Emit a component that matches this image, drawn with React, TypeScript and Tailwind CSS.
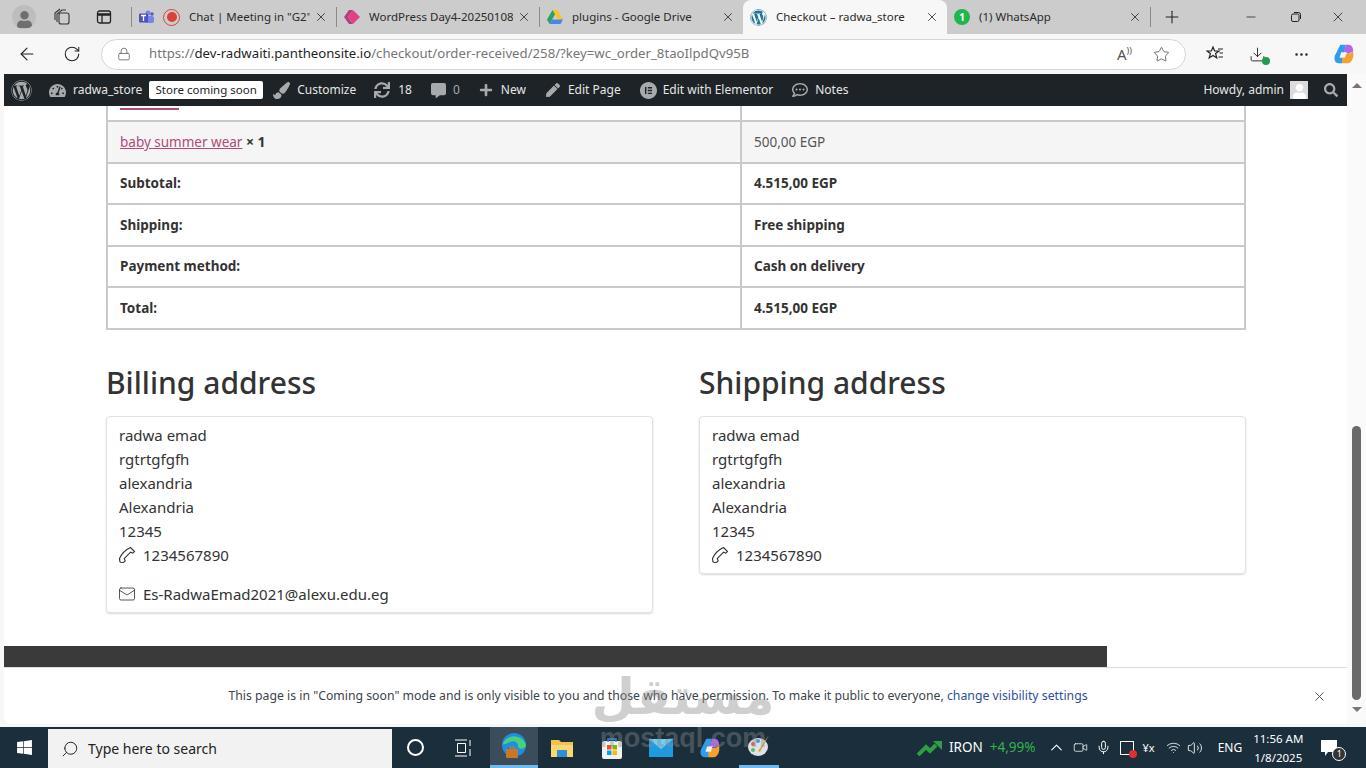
import type { ReactNode } from 'react'
import {
  ArrowLeft,
  ChevronUp,
  Download,
  Lock,
  Mail,
  Mic,
  Minus,
  MoreHorizontal,
  Plus,
  RotateCw,
  Search,
  Star,
  Video,
  Volume2,
  Wifi,
  X,
} from 'lucide-react'
import {
  FaCommentAlt,
  FaPaintBrush,
  FaPen,
  FaPlus,
  FaRegCommentDots,
  FaSearch,
  FaSync,
  FaTachometerAlt,
  FaUser,
  FaWindows,
  FaWordpress,
} from 'react-icons/fa'
import { SiElementor } from 'react-icons/si'

const ROWS = [
  { label: 'Subtotal:', value: '4.515,00 EGP' },
  { label: 'Shipping:', value: 'Free shipping' },
  { label: 'Payment method:', value: 'Cash on delivery' },
  { label: 'Total:', value: '4.515,00 EGP' },
]

const ADDRESS = ['radwa emad', 'rgtrtgfgfh', 'alexandria', 'Alexandria', '12345']

function TeamsIcon() {
  return (
    <svg width="15" height="15" viewBox="0 0 15 15">
      <circle cx="9" cy="3" r="2.5" fill="#7b83eb" />
      <circle cx="13" cy="4" r="1.7" fill="#5059c9" />
      <rect x="6" y="6" width="9" height="7" rx="2" fill="#7b83eb" />
      <rect x="0" y="3.5" width="9" height="9" rx="1" fill="#4b53bc" />
      <path d="M2 5.5h5M4.5 5.5V11" stroke="#fff" strokeWidth="1.3" />
    </svg>
  )
}

function DriveIcon() {
  return (
    <svg width="16" height="15" viewBox="0 0 16 15">
      <path d="M5.5 0h5L16 9.5h-5z" fill="#f7c325" />
      <path d="M5.5 0 0 9.5 2.5 14 8 4.5z" fill="#2da160" />
      <path d="M2.5 14h11l2.5-4.5H5z" fill="#4a86e8" />
    </svg>
  )
}

function SlidesIcon() {
  return (
    <svg width="16" height="14" viewBox="0 0 16 14">
      <path d="M0 7 5 0h4L4 7l5 7H5z" fill="#b0407c" />
      <path d="M4 7 9 0l7 7-7 7z" fill="#e0408a" />
    </svg>
  )
}

function CopilotIcon({ size }: { size: number }) {
  return (
    <svg width={size} height={size} viewBox="0 0 24 24">
      <path d="M8 2h6l-4 20H6C2 22 1 18 2 14z" fill="#2f9cf0" />
      <path d="M14 2h3c3 0 5 3 5 7l-5 3-5-2z" fill="#b566e8" />
      <path d="M10 12h8l4-3c1 6-1 13-6 13h-6z" fill="#f6a02d" />
      <path d="M9 10h6l-2 6H7z" fill="#f2f2f2" />
    </svg>
  )
}

function EdgeIcon() {
  return (
    <svg width="28" height="28" viewBox="0 0 28 28">
      <circle cx="14" cy="13" r="12" fill="#1f8ee0" />
      <path d="M3 12C5 3 22 1 26 13c0 4-6 5-8 2 1-4-4-7-8-5-3 1-5 3-7 2z" fill="#46d17e" />
      <path d="M9 15c0 5 5 9 12 8-4 3-12 3-15-3z" fill="#0c5aa6" />
      <rect x="6" y="17" width="12" height="9" rx="1" fill="#c9772a" />
      <rect x="10" y="15" width="4" height="3" fill="none" stroke="#c9772a" strokeWidth="1.2" />
    </svg>
  )
}

function HandsetIcon() {
  return (
    <svg width="18" height="18" viewBox="0 0 18 18" fill="none" stroke="#333" strokeWidth="1.1" className="-ml-px shrink-0">
      <path d="M12.5 1.5 16.5 5.5 14.8 7.2 12.6 6.2 6.2 12.6 7.2 14.8 5.5 16.5 2.6 16.2 1.8 15.4 1.5 12.5C3.5 8 8 3.5 12.5 1.5z" />
    </svg>
  )
}

function TabSeparator() {
  return <div className="h-5 w-px shrink-0 bg-[#8a8a8a]" />
}

function Tab({
  icon,
  title,
  width,
  active,
}: {
  icon: ReactNode
  title: string
  width: string
  active?: boolean
}) {
  return (
    <div
      className={`flex h-[34px] shrink-0 items-center pl-[7px] pr-[8px] text-[11.5px] text-[#2a2a2a] ${width} ${
        active ? 'rounded-t-lg bg-[#f7f7f7]' : ''
      }`}
    >
      <div className="flex shrink-0 items-center gap-[9px]">{icon}</div>
      <span className="ml-[9px] min-w-0 flex-1 overflow-hidden whitespace-nowrap">{title}</span>
      <X size={14} strokeWidth={1.5} className="ml-1 shrink-0 text-[#333]" />
    </div>
  )
}

function BrowserTabs() {
  return (
    <div className="flex h-[34px] shrink-0 items-center bg-[#cccccc]">
      <div className="flex w-[44px] justify-center pl-1">
        <div className="flex h-6 w-6 items-center justify-center overflow-hidden rounded-full bg-[#bdbdbd]">
          <FaUser size={17} className="mt-1 text-[#6f6f6f]" />
        </div>
      </div>
      <svg width="18" height="18" viewBox="0 0 18 18" fill="none" stroke="#333" strokeWidth="1.1" className="ml-[9px]">
        <rect x="6" y="5" width="10" height="11" rx="2" />
        <path d="M4 14V6l5-4h4M2 12V5l5-4" />
      </svg>
      <svg width="16" height="16" viewBox="0 0 16 16" fill="none" stroke="#222" strokeWidth="1.3" className="ml-[25px]">
        <rect x="1.5" y="2" width="13" height="12" rx="2" />
        <path d="M1.5 5.5h13" strokeWidth="2.5" />
        <path d="M6 5.5V14" />
      </svg>
      <div className="ml-[19px]">
        <TabSeparator />
      </div>
      <Tab
        width="w-[204px]"
        title={'Chat | Meeting in "G2"'}
        icon={
          <>
            <TeamsIcon />
            <span className="flex h-[17px] w-[17px] items-center justify-center rounded-full border border-[#d9413a]">
              <span className="h-[10px] w-[10px] rounded-full bg-[#d9413a]" />
            </span>
          </>
        }
      />
      <TabSeparator />
      <Tab width="w-[202px]" title="WordPress Day4-20250108" icon={<SlidesIcon />} />
      <TabSeparator />
      <Tab width="w-[203px]" title="plugins - Google Drive" icon={<DriveIcon />} />
      <Tab
        active
        width="w-[204px]"
        title="Checkout – radwa_store"
        icon={<FaWordpress size={17} className="text-[#21759b]" />}
      />
      <Tab
        width="w-[203px]"
        title="(1) WhatsApp"
        icon={
          <span className="flex h-4 w-4 items-center justify-center rounded-full bg-[#1fb650] text-[10px] font-bold text-white">
            1
          </span>
        }
      />
      <TabSeparator />
      <Plus size={20} strokeWidth={1.3} className="ml-[11px] text-[#222]" />
      <Minus size={14} strokeWidth={1.3} className="ml-[62px] text-[#222]" />
      <svg width="12" height="12" viewBox="0 0 12 12" fill="none" stroke="#222" className="ml-[32px]">
        <rect x="1.5" y="3" width="7.5" height="7.5" rx="1.5" />
        <path d="M4 1.5h4.5a2 2 0 0 1 2 2V8" />
      </svg>
      <X size={16} strokeWidth={1.2} className="ml-[28px] text-[#222]" />
    </div>
  )
}

function BrowserToolbar() {
  return (
    <div className="flex h-[40px] shrink-0 items-center bg-[#f7f7f7] text-[#222]">
      <ArrowLeft size={20} strokeWidth={1.4} className="ml-[17px]" />
      <RotateCw size={18} strokeWidth={1.4} className="ml-[26px]" />
      <div className="ml-[20px] flex h-[31px] w-[1085px] items-center rounded-full border border-[#d5d5d5] bg-white">
        <Lock size={14} strokeWidth={1.3} className="ml-[15px] text-[#555]" />
        <span className="ml-[18px] whitespace-nowrap text-[13.2px] text-[#767676]">
          https://<span className="text-[#1f1f1f]">dev-radwaiti.pantheonsite.io</span>
          /checkout/order-received/258/?key=wc_order_8taoIlpdQv95B
        </span>
        <div className="ml-auto flex items-center gap-[21px] pr-[15px] text-[#555]">
          <span className="text-[15px] leading-none">
            A<span className="text-[9px] align-super">))</span>
          </span>
          <Star size={17} strokeWidth={1.2} />
        </div>
      </div>
      <svg width="18" height="18" viewBox="0 0 18 18" fill="none" stroke="#222" strokeWidth="1.2" className="ml-[20px]">
        <path d="m7 2 1.6 4H13l-3.4 2.6 1.2 4.4L7 10.5 3.2 13l1.2-4.4L1 6h4.4z" />
        <path d="M12 4h5M13.5 8H17M12.5 12H17" />
      </svg>
      <div className="relative ml-[25px]">
        <Download size={17} strokeWidth={1.3} />
        <span className="absolute -bottom-0.5 -right-1 h-2 w-2 rounded-full bg-[#1f9d55]" />
      </div>
      <MoreHorizontal size={17} strokeWidth={1.6} className="ml-[27px]" />
      <div className="ml-[23px]">
        <CopilotIcon size={22} />
      </div>
    </div>
  )
}

function AdminItem({ icon, label, className }: { icon: ReactNode; label: string; className: string }) {
  return (
    <div className={`flex items-center ${className}`}>
      {icon}
      <span>{label}</span>
    </div>
  )
}

function AdminBar() {
  return (
    <div className="flex h-8 shrink-0 items-center bg-[#1d2327] text-[12px] text-[#e6e6e6]">
      <FaWordpress size={21} className="ml-[7px] text-[#a7aaad]" />
      <AdminItem
        className="ml-[17px] gap-[7px]"
        icon={<FaTachometerAlt size={17} className="text-[#a7aaad]" />}
        label="radwa_store"
      />
      <span className="ml-[7px] flex h-[18px] w-[114px] items-center justify-center rounded-[2px] bg-white text-[11.5px] text-[#1d2327]">
        Store coming soon
      </span>
      <AdminItem
        className="ml-[10px] gap-[7px]"
        icon={<FaPaintBrush size={17} className="text-[#a7aaad]" />}
        label="Customize"
      />
      <AdminItem
        className="ml-[18px] gap-[8px]"
        icon={<FaSync size={16} className="text-[#a7aaad]" />}
        label="18"
      />
      <div className="ml-[19px] flex items-center gap-[7px] text-[#a7aaad]">
        <FaCommentAlt size={15} />
        <span>0</span>
      </div>
      <AdminItem
        className="ml-[19px] gap-[8px]"
        icon={<FaPlus size={14} className="text-[#a7aaad]" />}
        label="New"
      />
      <AdminItem
        className="ml-[20px] gap-[8px]"
        icon={<FaPen size={14} className="text-[#a7aaad]" />}
        label="Edit Page"
      />
      <AdminItem
        className="ml-[19px] gap-[6px]"
        icon={<SiElementor size={17} className="text-[#a7aaad]" />}
        label="Edit with Elementor"
      />
      <AdminItem
        className="ml-[19px] gap-[7px]"
        icon={<FaRegCommentDots size={16} className="text-[#a7aaad]" />}
        label="Notes"
      />
      <div className="ml-auto flex items-center">
        <span>Howdy, admin</span>
        <span className="ml-[6px] flex h-[18px] w-[18px] items-end justify-center overflow-hidden bg-[#dcdcdc]">
          <FaUser size={15} className="text-white" />
        </span>
        <FaSearch size={14} className="ml-[16px] mr-[9px] text-[#a7aaad]" />
      </div>
    </div>
  )
}

function OrderTable() {
  return (
    <table className="ml-[102px] w-[1140px] table-fixed border-collapse border-2 border-[#c9c9c9] text-[13.5px] text-[#333]">
      <colgroup>
        <col className="w-[634px]" />
        <col />
      </colgroup>
      <tbody>
        <tr className="h-[41px]">
          <td className="border-2 border-[#c9c9c9] px-3 pt-[27px] align-top">
            {/* only the underline of this row's link is left below the admin bar */}
            <div className="h-[1.5px] w-[59px] bg-[#b14a7a]" />
          </td>
          <td className="border-2 border-[#c9c9c9] px-3" />
        </tr>
        <tr className="h-[41.5px] bg-[#f5f5f5]">
          <td className="border-2 border-[#c9c9c9] px-3">
            <span className="text-[#b14a7a] underline">baby summer wear</span> <b className="text-[14px]">× 1</b>
          </td>
          <td className="border-2 border-[#c9c9c9] px-3 text-[#555]">500,00 EGP</td>
        </tr>
        {ROWS.map((row) => (
          <tr key={row.label} className="h-[41.5px] font-bold">
            <td className="border-2 border-[#c9c9c9] px-3">{row.label}</td>
            <td className="border-2 border-[#c9c9c9] px-3">{row.value}</td>
          </tr>
        ))}
      </tbody>
    </table>
  )
}

function AddressCard({ title, email, width }: { title: string; email?: string; width: string }) {
  return (
    <div className={width}>
      <h2 className="mt-px text-[30px] font-medium leading-[38px] text-[#333]">{title}</h2>
      <div className="mt-[14px] rounded border border-[#e2e2e2] px-3 pb-[6px] pt-[6px] text-[15px] leading-6 text-[#333] shadow-[0_1px_2px_rgba(0,0,0,0.15)]">
        {ADDRESS.map((line) => (
          <div key={line}>{line}</div>
        ))}
        <div className="flex items-center gap-[7px]">
          <HandsetIcon />
          1234567890
        </div>
        {email && (
          <div className="mt-[15px] flex items-center gap-[7px]">
            <Mail size={18} strokeWidth={1.1} className="-ml-px" />
            {email}
          </div>
        )}
      </div>
    </div>
  )
}

function ScrollTrack() {
  return (
    <div className="flex h-full w-[19px] shrink-0 flex-col items-center bg-[#fafafa] pt-[9px]">
      <div className="h-0 w-0 border-x-[5px] border-b-[5px] border-x-transparent border-b-[#777]" />
      <div className="mt-[338px] h-[274px] w-[9px] rounded-full bg-[#6a6a6a]" />
      <div className="mt-[7px] h-0 w-0 border-x-[5px] border-t-[5px] border-x-transparent border-t-[#777]" />
    </div>
  )
}

function PageViewport() {
  return (
    <div className="flex h-[653px] shrink-0 bg-[#f7f7f7] pb-[3px] pl-[4px]">
      <div className="flex min-w-0 flex-1 overflow-hidden rounded-b-lg bg-white">
        <div className="flex w-[1343px] shrink-0 flex-col">
          <AdminBar />
          <div className="h-[561px] overflow-hidden">
            <div className="-mt-[27px]">
              <OrderTable />
            </div>
            <div className="ml-[102px] mt-[33px] flex items-start gap-[46px]">
              <AddressCard width="w-[547px]" title="Billing address" email="Es-RadwaEmad2021@alexu.edu.eg" />
              <AddressCard width="w-[547px]" title="Shipping address" />
            </div>
            <div className="mt-[33px] h-[21px] w-[1103px] bg-[#3a3a3a]" />
          </div>
          <div className="relative flex h-[57px] items-center justify-center border-t border-[#dcdcdc] pr-[35px] pt-px text-[12.25px] text-[#3c434a]">
            <span>
              This page is in "Coming soon" mode and is only visible to you and those who have permission. To make it
              public to everyone, <span className="text-[#2b4ea0]">change visibility settings</span>
            </span>
            <X size={15} strokeWidth={1.6} className="absolute right-[20px] top-[21px] text-[#555]" />
          </div>
        </div>
        <ScrollTrack />
      </div>
    </div>
  )
}

function Taskbar() {
  return (
    <div className="flex h-[41px] flex-1 items-center bg-[#1b2e3c] text-white">
      <div className="flex w-[48px] justify-center">
        <FaWindows size={17} />
      </div>
      <div className="flex h-[39px] w-[344px] items-center self-end bg-[#f2f2f2] text-[14px] text-[#222]">
        <Search size={18} strokeWidth={1.3} className="ml-[13px] -scale-x-100" />
        <span className="ml-[9px]">Type here to search</span>
      </div>
      <div className="ml-[15px] h-[17px] w-[17px] rounded-full border-2 border-white" />
      <svg width="18" height="18" viewBox="0 0 18 18" fill="none" stroke="#fff" className="ml-[30px]">
        <path d="M1 1h12M1 17h12M3.5 4.5h8v9h-8zM16 1v6M16 10v7" />
      </svg>
      <div className="ml-[18px] flex h-full w-[48px] items-center justify-center border-b-[3px] border-[#6fb9ee] bg-[#3b4d5b]">
        <EdgeIcon />
      </div>
      <svg width="22" height="20" viewBox="0 0 22 20" className="ml-[13px]">
        <path d="M0 2h8l2 2h12v15H0z" fill="#f2c14e" />
        <path d="M0 7h22v12H0z" fill="#f8d775" />
        <rect x="6" y="12" width="10" height="7" fill="#2d8fd5" />
      </svg>
      <svg width="22" height="22" viewBox="0 0 22 22" className="ml-[28px]">
        <rect x="1" y="4" width="20" height="18" rx="2" fill="#f2f2f2" />
        <path d="M7 5V2h8v3" fill="none" stroke="#2d8fd5" strokeWidth="1.5" />
        <rect x="6" y="8" width="4.5" height="4.5" fill="#f25022" />
        <rect x="11.5" y="8" width="4.5" height="4.5" fill="#7fba00" />
        <rect x="6" y="13.5" width="4.5" height="4.5" fill="#00a4ef" />
        <rect x="11.5" y="13.5" width="4.5" height="4.5" fill="#ffb900" />
      </svg>
      <svg width="24" height="18" viewBox="0 0 24 18" className="ml-[26px]">
        <rect width="24" height="18" fill="#1e9be0" />
        <path d="M0 0 12 10 24 0z" fill="#6fd0f5" />
      </svg>
      <div className="ml-[26px]">
        <CopilotIcon size={22} />
      </div>
      <div className="ml-[18px] flex h-full w-[40px] items-center justify-center border-b-[3px] border-[#6fb9ee]">
        <svg width="24" height="24" viewBox="0 0 24 24">
          <ellipse cx="11" cy="13" rx="10" ry="9" fill="#dfe3e8" />
          <circle cx="6" cy="10" r="2" fill="#e25555" />
          <circle cx="11" cy="7" r="2" fill="#3c9be0" />
          <circle cx="6" cy="16" r="2" fill="#5dbb63" />
          <path d="m22 1-9 17-2-1z" fill="#d9a441" />
        </svg>
      </div>
      <svg width="26" height="16" viewBox="0 0 26 16" className="ml-[138px]">
        <path d="M1 15 9 7l4 4 6-6" fill="none" stroke="#2f9e44" strokeWidth="4" />
        <path d="M16 1h9v9z" fill="#2f9e44" />
      </svg>
      <span className="ml-[6px] text-[13.5px]">IRON</span>
      <span className="ml-[7px] text-[13.5px] text-[#37b24d]">+4,99%</span>
      <ChevronUp size={19} strokeWidth={1.4} className="ml-[11px]" />
      <Video size={15} strokeWidth={1.2} className="ml-[7px]" />
      <Mic size={15} strokeWidth={1.6} className="ml-[8px]" />
      <div className="relative ml-[9px] h-[14px] w-[14px] border border-white">
        <span className="absolute -bottom-1 -right-1 h-2 w-2 rounded-full bg-[#e03131]" />
      </div>
      <span className="ml-[9px] text-[11px] leading-none">¥x</span>
      <Wifi size={15} strokeWidth={1.3} className="ml-[11px]" />
      <Volume2 size={16} strokeWidth={1.3} className="ml-[6px]" />
      <span className="ml-[15px] text-[12px]">ENG</span>
      <div className="ml-[11px] flex flex-col items-center text-[11.5px] leading-[19px]">
        <span>11:56 AM</span>
        <span>1/8/2025</span>
      </div>
      <div className="relative ml-[17px]">
        <svg width="18" height="18" viewBox="0 0 18 18" fill="#fff">
          <path d="M1 1h16v12H8l-3 4v-4H1z" />
        </svg>
        <span className="absolute -bottom-1 -right-2 flex h-[14px] w-[14px] items-center justify-center rounded-full border border-white bg-[#333] text-[9px]">
          1
        </span>
      </div>
    </div>
  )
}

export default function App() {
  return (
    <div className="relative flex h-[768px] w-[1366px] flex-col overflow-hidden bg-white font-['Noto_Sans',sans-serif]">
      <BrowserTabs />
      <BrowserToolbar />
      <PageViewport />
      <Taskbar />
      {/* mostaql watermark sits over everything */}
      <div className="pointer-events-none absolute left-[600px] top-[665px] flex w-[166px] flex-col items-center text-[#8a8a8a] opacity-40">
        <span className="font-['DejaVu_Sans',sans-serif] text-[50px] font-bold leading-[64px]">مستقل</span>
        <span className="-mt-[6px] font-['Liberation_Sans',sans-serif] text-[27px] font-bold leading-[30px]">mostaql.com</span>
      </div>
    </div>
  )
}
